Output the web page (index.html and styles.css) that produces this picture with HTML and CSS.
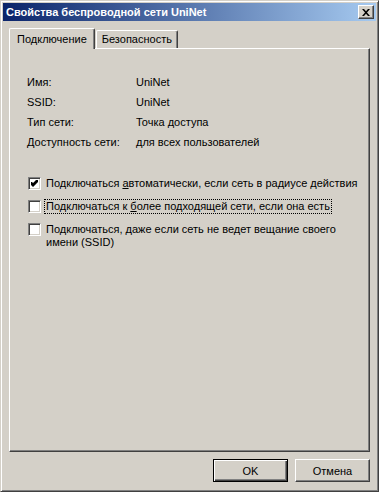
FILE: index.html
```html
<!DOCTYPE html>
<html lang="ru">
<head>
  <meta charset="UTF-8" />
  <meta name="viewport" content="width=device-width, initial-scale=1.0"/>
  <title>Свойства беспроводной сети UniNet</title>
  <link rel="stylesheet" href="styles.css">
</head>
<body>

  <div class="window">
    <div class="titlebar">
      <span class="title">Свойства беспроводной сети UniNet</span>
      <span class="close">
        <svg width="8" height="7" viewBox="0 0 8 7">
          <path d="M0 0h2l2 2.2L6 0h2L5 3.5 8 7H6L4 4.8 2 7H0l3-3.5z" fill="#000"/>
        </svg>
      </span>
    </div>

    <div class="content">
      <div class="tabs">
        <div class="tab active">Подключение</div>
        <div class="tab">Безопасность</div>
      </div>

      <div class="panel">
        <div class="props">
          <span>Имя:</span><span>UniNet</span>
          <span>SSID:</span><span>UniNet</span>
          <span>Тип сети:</span><span>Точка доступа</span>
          <span>Доступность сети:</span><span>для всех пользователей</span>
        </div>

        <div class="options">
          <div class="option">
            <span class="check"><svg width="7" height="7" viewBox="0 0 7 7"><path d="M0 2h1l1 1 4-4h1v3L2 7 0 5z" fill="#000"/></svg></span>
            <span class="label">Подключаться <u>а</u>втоматически, если сеть в радиусе действия</span>
          </div>
          <div class="option">
            <span class="check"></span>
            <span class="label focus">Подключаться к <u>б</u>олее подходящей сети, если она есть</span>
          </div>
          <div class="option">
            <span class="check"></span>
            <span class="label multi">По<u>д</u>ключаться, даже если сеть не ведет вещание своего имени (SSID)</span>
          </div>
        </div>
      </div>

      <div class="buttons">
        <button class="default">OK</button>
        <button>Отмена</button>
      </div>
    </div>
  </div>

</body>
</html>
```

FILE: styles.css
```css
body {
  margin: 0;
  font-family: "Liberation Sans", Arial, sans-serif;
  font-size: 11px;
  color: #000;
  background-color: #d4d0c8;
}

.window {
  width: 379px;
  height: 492px;
  box-sizing: border-box;
  display: flex;
  flex-direction: column;
  padding: 2px;
  border: 1px solid;
  border-color: #d4d0c8 #404040 #404040 #d4d0c8;
  box-shadow: inset 1px 1px #fff, inset -1px -1px #808080;
  background-color: #d4d0c8;
}

.titlebar {
  height: 18px;
  display: flex;
  align-items: center;
  justify-content: space-between;
  padding: 0 2px 0 3px;
  background: linear-gradient(to right, #0a246a, #a6caf0);
  color: white;
}

.title {
  font-weight: bold;
  font-size: 11px;
}

.close {
  width: 16px;
  height: 14px;
  box-sizing: border-box;
  display: flex;
  align-items: center;
  justify-content: center;
  background-color: #d4d0c8;
  border: 1px solid;
  border-color: #fff #404040 #404040 #fff;
  box-shadow: inset -1px -1px #808080;
}

.content {
  flex: 1;
  display: flex;
  flex-direction: column;
  padding: 7px 6px 7px 6px;
}

.tabs {
  height: 20px;
  display: flex;
  align-items: flex-end;
}

.tab {
  height: 17px;
  line-height: 17px;
  padding: 0 5px;
  margin-left: 1px;
  border-top: 1px solid #fff;
  border-left: 1px solid #fff;
  border-right: 1px solid #404040;
  border-radius: 2px 2px 0 0;
  box-shadow: inset -1px 0 #808080;
}

.tab.active {
  height: 20px;
  line-height: 20px;
  padding: 0 7px;
  margin-left: 0;
  margin-bottom: -1px;
  z-index: 1;
  background-color: #d4d0c8;
}

.panel {
  flex: 1;
  padding: 23px 2px 0 17px;
  border: 1px solid;
  border-color: #fff #404040 #404040 #fff;
  box-shadow: inset -1px -1px #808080;
}

.props {
  display: grid;
  grid-template-columns: 109px auto;
  grid-auto-rows: 20px;
  align-items: center;
}

.options {
  margin-top: 24px;
  display: flex;
  flex-direction: column;
  gap: 8px;
}

.option {
  display: flex;
  align-items: flex-start;
  gap: 3px;
  padding-left: 1px;
}

.check {
  width: 13px;
  height: 13px;
  box-sizing: border-box;
  flex-shrink: 0;
  margin-top: 1px;
  display: flex;
  align-items: center;
  justify-content: center;
  background-color: #fff;
  border: 1px solid;
  border-color: #808080 #fff #fff #808080;
  box-shadow: inset 1px 1px #404040, inset -1px -1px #d4d0c8;
}

.label {
  line-height: 13px;
  padding: 0 1px;
  border: 1px solid transparent;
  white-space: nowrap;
}

.label.multi {
  white-space: normal;
  max-width: 300px;
}

.label.focus {
  border: 1px dotted #000;
}

.buttons {
  display: flex;
  justify-content: flex-end;
  gap: 7px;
  margin-top: 7px;
}

button {
  width: 75px;
  height: 23px;
  font-family: "Liberation Sans", Arial, sans-serif;
  font-size: 11px;
  color: #000;
  background-color: #d4d0c8;
  border: 1px solid;
  border-color: #fff #404040 #404040 #fff;
  box-shadow: inset -1px -1px #808080;
  padding: 0;
}

button.default {
  border: 1px solid #000;
  box-shadow: inset 1px 1px #fff, inset -1px -1px #404040, inset -2px -2px #808080;
}
```
